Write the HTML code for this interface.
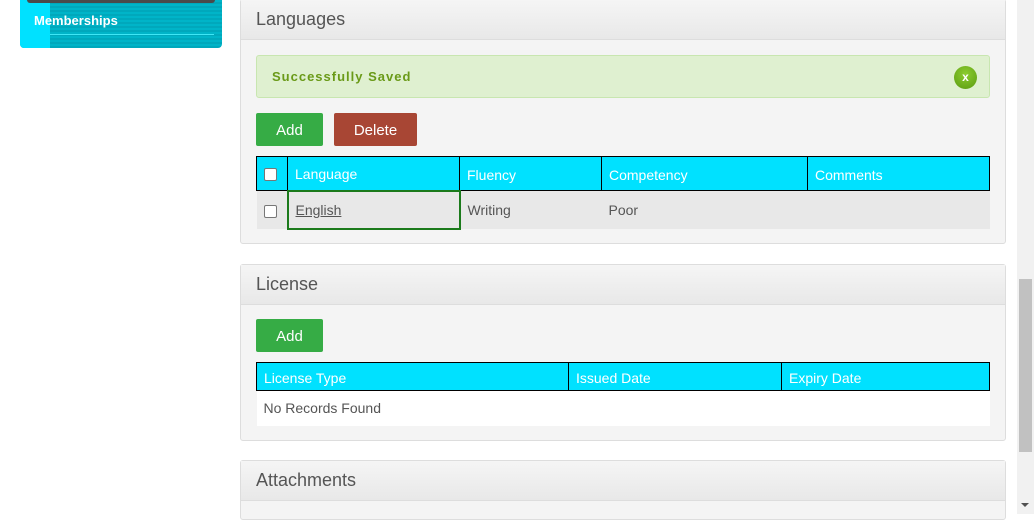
<!DOCTYPE html>
<html><head><style>
*{box-sizing:border-box;margin:0;padding:0}
body{width:1034px;height:514px;overflow:hidden;background:#fff;font-family:"Liberation Sans",sans-serif;position:relative;color:#555}
.abs{position:absolute}
.side{left:20px;top:0;width:202px;height:48px;border-radius:0 0 4px 4px;overflow:hidden;background:repeating-linear-gradient(180deg,#00b4c8 0 2px,#00a8bc 2px 4px)}
.side .strip{position:absolute;left:0;top:0;width:30px;height:48px;background:#00e1ff}
.side .bar{position:absolute;left:7px;top:0;width:188px;height:3px;background:#4a4a4a;border-radius:0 0 3px 3px}
.side .line{position:absolute;left:30px;top:34px;width:164px;height:1px;background:#3fe6f5}
.side span{position:absolute;left:14px;top:13px;color:#fff;font-size:13px;font-weight:bold}
.panel{left:240px;width:766px;border:1px solid #ddd;border-radius:3px;background:#f4f4f4}
.ph{height:40px;background:linear-gradient(#f5f5f5,#e8e8e8);border-bottom:1px solid #ddd;font-size:18px;color:#555;padding:9px 15px}
.btn{position:absolute;height:33px;color:#fff;font-size:15px;text-align:center;line-height:35px;border-radius:2px}
table{position:absolute;left:15px;width:734px;border-collapse:collapse;font-size:14px}
th{background:#00e1ff;color:#fff;font-weight:normal;text-align:left;border:1px solid #000;padding:2px 7px 0;height:34px}
td{padding:0 7px;color:#555}
.cb{display:inline-block;width:13px;height:13px;border:1px solid #777;border-radius:2px;background:#fff;vertical-align:middle}
</style></head><body>
<div class="abs side"><div class="strip"></div><div class="bar"></div><div class="line"></div><span>Memberships</span></div>

<div class="abs panel" style="top:-1px;height:245px">
<div class="ph">Languages</div>
<div class="abs" style="left:15px;top:55px;width:734px;height:43px;background:#dff0d0;border:1px solid #c8e6b0;border-radius:3px;color:#6a9a18;font-weight:bold;font-size:13px;letter-spacing:1px;padding:13px 15px">Successfully Saved
<div class="abs" style="right:12px;top:10px;width:23px;height:23px;border-radius:50%;background:radial-gradient(circle at 50% 35%,#8ccd30,#5a9a10);color:#fff;font-size:12px;text-align:center;line-height:22px;letter-spacing:0">x</div></div>
<div class="btn" style="left:15px;top:113px;width:67px;background:#36ac45">Add</div>
<div class="btn" style="left:93px;top:113px;width:83px;background:#a84634">Delete</div>
<table style="top:156px">
<tr><th style="width:31px;padding:0 7px"><span class="cb"></span></th><th style="width:172px">Language</th><th style="width:142px">Fluency</th><th style="width:206px">Competency</th><th>Comments</th></tr>
<tr style="background:#e8e8e8;height:38px"><td><span class="cb"></span></td><td style="border:2px solid #1b7a1b"><u>English</u></td><td>Writing</td><td>Poor</td><td></td></tr>
</table>
</div>

<div class="abs panel" style="top:264px;height:177px">
<div class="ph">License</div>
<div class="btn" style="left:15px;top:54px;width:67px;background:#36ac45">Add</div>
<table style="top:97px">
<tr><th style="width:312px;height:28px">License Type</th><th style="width:213px;height:28px">Issued Date</th><th style="height:28px">Expiry Date</th></tr>
<tr style="background:#fff;height:35px"><td colspan="3">No Records Found</td></tr>
</table>
</div>

<div class="abs panel" style="top:460px;height:60px">
<div class="ph">Attachments</div>
</div>

<div class="abs" style="left:1017px;top:0;width:17px;height:514px;background:#f1f1f1"></div>
<div class="abs" style="left:1019px;top:279px;width:13px;height:173px;background:#c1c1c1"></div>
<div class="abs" style="left:1021px;top:503px;width:0;height:0;border-left:4px solid transparent;border-right:4px solid transparent;border-top:4px solid #505050"></div>
</body></html>
